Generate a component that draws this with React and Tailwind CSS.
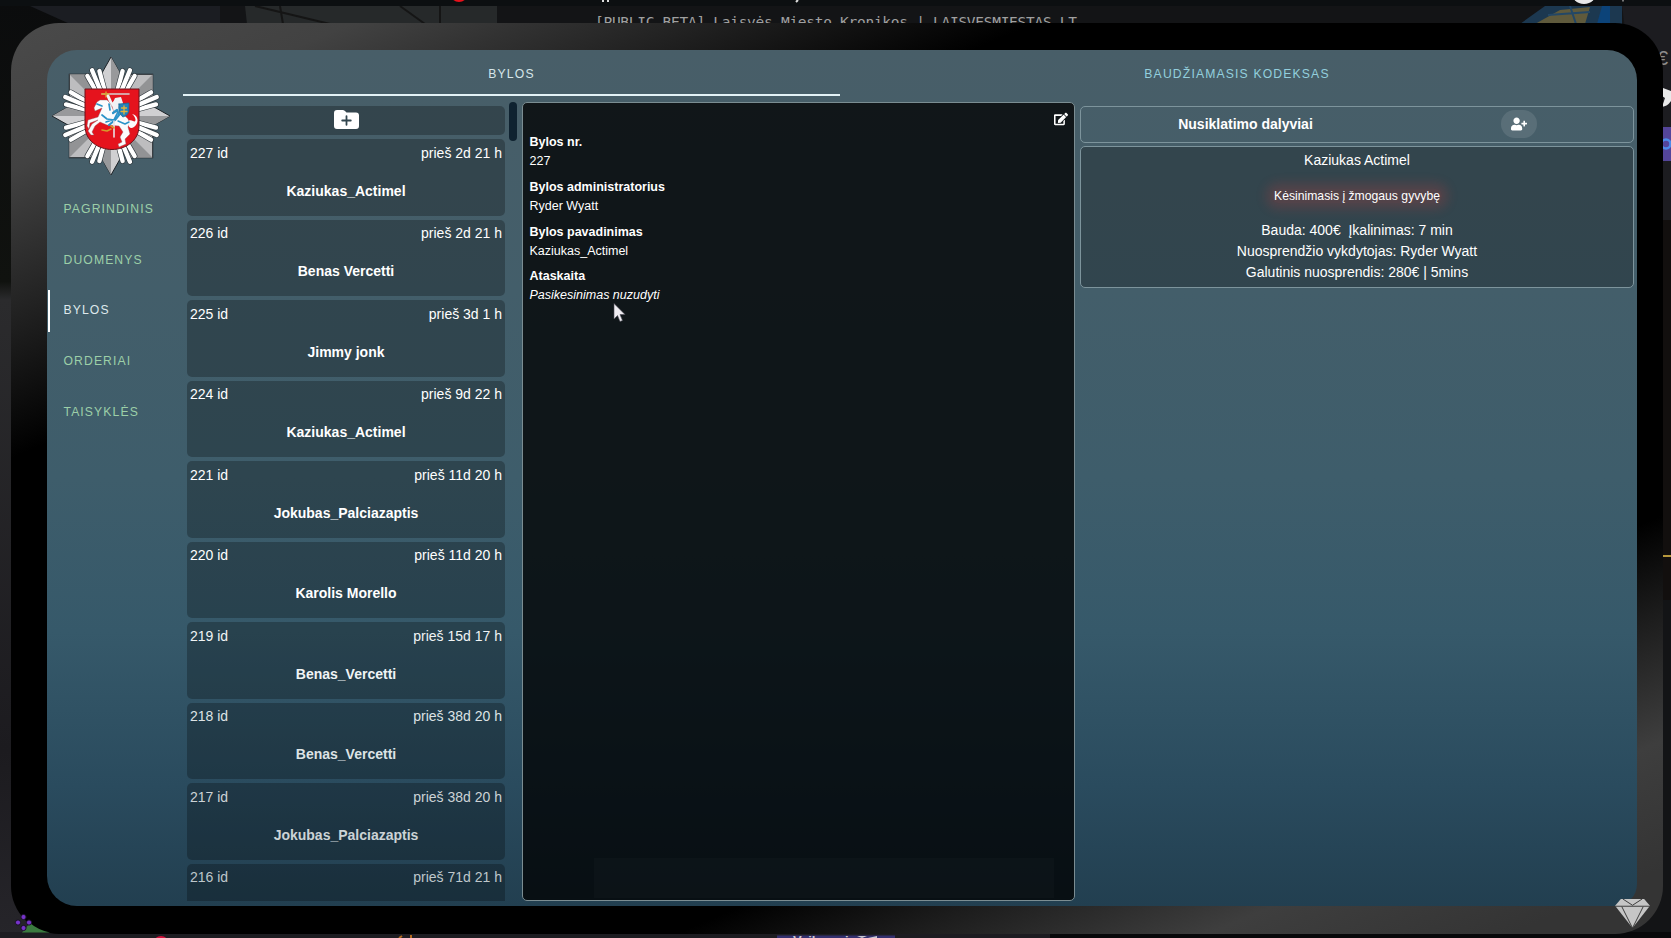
import React from "react";
import { FaEdit, FaUserPlus } from "react-icons/fa";

const NAV = ["PAGRINDINIS", "DUOMENYS", "BYLOS", "ORDERIAI", "TAISYKLĖS"];

const CASES = [
  ["227 id", "prieš 2d 21 h", "Kaziukas_Actimel", "text-white"],
  ["226 id", "prieš 2d 21 h", "Benas Vercetti", "text-white"],
  ["225 id", "prieš 3d 1 h", "Jimmy jonk", "text-white"],
  ["224 id", "prieš 9d 22 h", "Kaziukas_Actimel", "text-white"],
  ["221 id", "prieš 11d 20 h", "Jokubas_Palciazaptis", "text-white"],
  ["220 id", "prieš 11d 20 h", "Karolis Morello", "text-white"],
  ["219 id", "prieš 15d 17 h", "Benas_Vercetti", "text-[#f0f4f5]"],
  ["218 id", "prieš 38d 20 h", "Benas_Vercetti", "text-[#dde3e5]"],
  ["217 id", "prieš 38d 20 h", "Jokubas_Palciazaptis", "text-[#ccd3d6]"],
  ["216 id", "prieš 71d 21 h", "", "text-[#bec7cb]"],
];

const DETAILS = [
  ["Bylos nr.", "227"],
  ["Bylos administratorius", "Ryder Wyatt"],
  ["Bylos pavadinimas", "Kaziukas_Actimel"],
];

function Emblem() {
  const diagonals = [45, 135, 225, 315];
  const rays = [22.5, 67.5, 112.5, 157.5, 202.5, 247.5, 292.5, 337.5];
  return (
    <svg viewBox="-60 -60 120 120" className="h-[120px] w-[120px]">
      {diagonals.map((a) => (
        <g key={a} transform={`rotate(${a})`}>
          <path d="M0-59 L-17-42 L-12 0 H12 L17-42Z" fill="#bdbdbf" stroke="#1d2226" strokeWidth="1" />
          <path d="M0-59 L17-42 L12 0 H0Z" fill="#929395" />
        </g>
      ))}
      {[0, 90, 180, 270].map((a) => (
        <g key={a} transform={`rotate(${a})`}>
          <path d="M0-59 L-13-36 L-8 0 H8 L13-36Z" fill="#d0d0d2" stroke="#1d2226" strokeWidth="1" />
          <path d="M0-59 L13-36 L8 0 H0Z" fill="#98999b" />
        </g>
      ))}
      {rays.map((a) => (
        <g key={a} transform={`rotate(${a})`} strokeLinecap="round">
          <path d="M-2-12L-6.500-46M2-12L6.500-46" stroke="#30383d" strokeWidth="5.600" />
          <path d="M-2-12L-6.500-46M2-12L6.500-46" stroke="#ffffff" strokeWidth="4.400" />
          <path d="M0-12V-49.500" stroke="#30383d" strokeWidth="5.600" />
          <path d="M0-12V-49.500" stroke="#ffffff" strokeWidth="4.400" />
        </g>
      ))}
      <path d="M-26-27H28V10C28 25 14 33.500 1 33.500S-26 25-26 10Z" fill="#e5131d" stroke="#6d1118" strokeWidth="1" />
      <g strokeLinejoin="round" strokeLinecap="round">
        <path d="M-9-22H18" stroke="#d5cfd0" strokeWidth="1.600" />
        <path d="M-9-22H-2M-5-24V-19" stroke="#d59a2c" strokeWidth="1.500" />
        <path d="M-3-20L1-11L4-14" stroke="#f4f4f6" strokeWidth="3" fill="none" />
        <path d="M4-18L10-19L12-13L9-2L3 0L1-11Z" fill="#f1f1f4" />
        <path d="M-14-14L-11-16L-4-16C0-13 1-9 3-4L14 0C18 3 19 6 17 11L19 18L14 23L15 28L8 31L7 28L11 26L9 21L12 16L8 10L-4 9L-11 6L-16 10L-19 16L-17 19L-20 19L-23 15L-19 8L-13 4L-21 7L-22 13L-24 10L-23 4L-13 1L-9-8L-16-5L-17-8Z" fill="#fbfbfc" stroke="#8f5a66" strokeWidth=".4" />
        <path d="M17 8C15 5 19 3 22 5C26 7 25 1 21-2C28-1 28 8 23 11C20 13 18 12 17 8Z" fill="#fbfbfc" />
        <path d="M-14-12L-9-10M-2-12L-1-6M-9-1L-4 3L3 4L6-2M-5 6L1 4" stroke="#2b93c8" strokeWidth="1.700" fill="none" />
        <path d="M2-3L6-6L8-1L4 4L-2 9" stroke="#2b93c8" strokeWidth="2.200" fill="none" />
        <path d="M7 5L14 8L18 6" stroke="#2b93c8" strokeWidth="1.400" fill="none" />
        <path d="M3 5V21" stroke="#e8e2e4" strokeWidth="1.600" />
        <path d="M0 13L-4 15L-9 14M0 10L3 12" stroke="#d59a2c" strokeWidth="1.600" fill="none" />
        <path d="M8-12L18-13V-6C18-2 15 0 12 1C9-1 7-5 8-12Z" fill="#2382bb" stroke="#17648f" strokeWidth=".7" />
        <path d="M13-10V-2M10.500-8H15.500M10-4.500H16" stroke="#e3b43a" strokeWidth="1.300" />
      </g>
    </svg>
  );
}

function FolderPlus() {
  return (
    <svg viewBox="0 0 25 19" className="h-[19px] w-[25px]" aria-hidden="true">
      <path d="M3 0H8.500Q10 0 11 1L12.500 2.500H22Q25 2.500 25 5.500V16Q25 19 22 19H3Q0 19 0 16V3Q0 0 3 0Z" fill="#fff" />
      <path d="M8.200 10.500H16.800M12.500 6.200V14.800" stroke="#33464f" strokeWidth="1.800" strokeLinecap="round" />
    </svg>
  );
}

function Sidebar() {
  return (
    <aside className="flex w-[136px] shrink-0 flex-col">
      <div className="mt-[6px] ml-[4px] h-[120px]">
        <Emblem />
      </div>
      <nav className="mt-[12px] flex flex-col gap-[8.800px] text-[12.200px] tracking-[1.100px]">
        {NAV.map((n) => (
          <a
            key={n}
            className={
              n === "BYLOS"
                ? "ml-[1px] flex h-[42px] items-center border-l-2 border-white pl-[13.500px] text-[#dfe9ec]"
                : "ml-[1px] flex h-[42px] items-center border-l-2 border-transparent pl-[13.500px] text-[#9ccfa8]"
            }
          >
            {n}
          </a>
        ))}
      </nav>
    </aside>
  );
}

function CaseList() {
  return (
    <section className="flex w-[334px] shrink-0 justify-between pl-[4px]">
      <div className="flex w-[318px] flex-col gap-[4px] overflow-hidden pt-[4px]">
        <button className="flex h-[29px] shrink-0 items-center justify-center rounded-[5px] bg-black/26 pb-[2px] text-white">
          <FolderPlus />
        </button>
        {CASES.map(([id, ago, name, tone]) => (
          <article key={id} className={`flex h-[76.500px] shrink-0 flex-col rounded-[5px] bg-black/26 px-[3px] pt-[3.500px] ${tone}`}>
            <div className="flex justify-between text-[14px] leading-[20px]">
              <span>{id}</span>
              <span>{ago}</span>
            </div>
            {name && <h3 className="mt-[18px] text-center text-[14px] leading-[20px] font-bold">{name}</h3>}
          </article>
        ))}
      </div>
      <div className="h-[39px] w-[8px] rounded-[4px] bg-[#0f2230]" />
    </section>
  );
}

function CaseDetails() {
  return (
    <section className="flex w-[553.500px] shrink-0 flex-col rounded-[5px] border border-[#7b8d92] bg-black/76 px-[7px] text-[12.500px] text-white">
      <div className="flex h-[30px] items-center justify-end">
        <FaEdit size={14} className="mt-[2px] mr-[-1px]" />
      </div>
      <dl className="flex flex-col leading-[19.400px]">
        {DETAILS.map(([k, v]) => (
          <div key={k} className="mb-[6px]">
            <dt className="font-bold">{k}</dt>
            <dd>{v}</dd>
          </div>
        ))}
        <dt className="font-bold">Ataskaita</dt>
        <dd className="leading-[17px] italic">Pasikesinimas nuzudyti</dd>
      </dl>
      <div className="mt-auto mr-[13px] mb-[2px] ml-[64px] h-[40px] bg-white/2" />
    </section>
  );
}

function Participants() {
  return (
    <section className="ml-[5px] flex w-[554px] shrink-0 flex-col gap-[3px] pt-[4px] text-[14px] text-white">
      <header className="flex h-[37px] items-center rounded-[5px] border border-[#7d949c]">
        <div className="w-[329px] pb-[1px] text-center font-bold">Nusiklatimo dalyviai</div>
        <div className="flex flex-1 justify-center pr-[6px] pb-[1px]">
          <button className="flex h-[28px] w-[36px] items-center justify-center rounded-full bg-white/10">
            <FaUserPlus size={16} />
          </button>
        </div>
      </header>
      <article className="flex h-[142px] flex-col items-center rounded-[5px] border border-[#7d949c] bg-black/26 leading-[21px]">
        <div className="mt-[3px]">Kaziukas Actimel</div>
        <div className="mt-[18px] rounded-[6px] bg-[#d23c3c]/20 px-[2px] text-[12.200px] leading-[14px] shadow-[0_0_11px_6px_rgba(210,60,60,0.2)]">
          Kėsinimasis į žmogaus gyvybę
        </div>
        <div className="mt-[17px]">Bauda: 400€&nbsp; Įkalinimas: 7 min</div>
        <div>Nuosprendžio vykdytojas: Ryder Wyatt</div>
        <div>Galutinis nuosprendis: 280€ | 5mins</div>
      </article>
    </section>
  );
}

function Backdrop() {
  return (
    <svg viewBox="0 0 1671 938" className="absolute inset-0 h-full w-full" aria-hidden="true">
      <defs>
        <linearGradient id="left" x1="0" y1="0" x2="0" y2="1">
          <stop offset="0" stopColor="#0b0c0d" />
          <stop offset=".3" stopColor="#10120f" />
          <stop offset=".32" stopColor="#2b2b2d" />
          <stop offset=".8" stopColor="#1c1b1f" />
          <stop offset="1" stopColor="#26252a" />
        </linearGradient>
      </defs>
      <rect width="1671" height="938" fill="#131416" />
      <rect width="70" height="938" fill="url(#left)" />
      <path d="M30 6H220V24H70Z" fill="#1b1d22" />
      <path d="M245 6H497V24H247Z" fill="#26292a" />
      <path d="M255 6L330 24M280 6L283 24M400 6L425 24M440 6V24" stroke="#151515" strokeWidth="2" />
      <path d="M1545 6H1622V24H1520Z" fill="#1c3850" />
      <path d="M1560 10L1590 7L1585 24H1535Z" fill="#5f5a3c" />
      <path d="M1570 6L1576 24M1548 15L1590 12" stroke="#234766" strokeWidth="2" />
      <path d="M1602 6H1610V24H1597Z" fill="#0c4379" />
      <path d="M1622 6H1671V220H1650Z" fill="#1c1c20" />
      <path d="M1655 220H1671V600H1655Z" fill="#120f0e" />
      <path d="M1655 555H1671V557H1655Z" fill="#b7983c" />
      <rect width="1671" height="6" fill="#0c0f11" />
      <rect y="932" width="1671" height="6" fill="#1d1c21" />
      <rect x="1050" y="932" width="621" height="6" fill="#08080a" />
      <circle cx="459" cy="-7" r="9" fill="#e8111b" />
      <circle cx="1584" cy="-9" r="13" fill="#e9e9e9" />
      <path d="M603 0V2M608 0V2M798 0L796 2" stroke="#ddd" strokeWidth="2" />
      <path d="M1623 0V1.500" stroke="#999" strokeWidth="1.500" />
      <circle cx="161" cy="944" r="8" fill="#d5103a" />
      <path d="M399 938L402 936M411 938V935" stroke="#b36a1d" strokeWidth="2" />
      <rect x="777" y="935.500" width="118" height="6" fill="#34306e" />
      <text x="793" y="945" fontSize="13" fontWeight="700" fill="#c9c9d2" fontFamily="Liberation Sans, sans-serif">
        Veiksmai
      </text>
      <path d="M857 936H867L862 938ZM868 938L877 936V938Z" fill="#c9c9d2" />
      <rect x="1655" y="127" width="20" height="34" rx="4" fill="#54459a" />
      <circle cx="1666" cy="144" r="4.500" fill="none" stroke="#4c8bea" strokeWidth="2.500" />
      <path d="M1663 88L1671 91V101C1669 104 1667 106 1662 107L1665 98L1662 96Z" fill="#e9e9e9" />
      <text x="1657" y="65" fontSize="20" fill="#8c8c8c" fontFamily="Liberation Sans, sans-serif">€</text>
      <text x="595" y="26.500" fontSize="14.500" textLength="482" fill="#a0a0a0" fontFamily="DejaVu Sans Mono, monospace">
        [PUBLIC BETA] Laisvės Miesto Kronikos | LAISVESMIESTAS.LT
      </text>
    </svg>
  );
}

export default function App() {
  return (
    <div className="relative h-[938px] w-[1671px] overflow-hidden bg-[#131416] pt-[23px] pl-[11px] font-['Liberation_Sans',Arial,sans-serif]">
      <Backdrop />
      <main className="relative h-[911px] w-[1652px] rounded-[48px] bg-[linear-gradient(157deg,#4a4a4a_0%,#424242_9%,#222_18%,#000_27%,#000_74%,#1c1c1c_80%,#3e3e3e_88%,#343434_96%)] pt-[27px] pl-[36px]">
        <div className="flex h-[856px] w-[1590px] overflow-hidden rounded-[30px] rounded-br-[22px] bg-[linear-gradient(180deg,#485e68_0%,#435e6a_28%,#3e5d6b_50%,#36596a_68%,#2a4b5e_86%,#223f50_100%)]">
          <Sidebar />
          <div className="flex flex-col">
            <div className="flex h-[46px] shrink-0 text-[12.200px] tracking-[1.150px]">
              <div className="flex w-[657px] items-center justify-center border-b-2 border-[#e3f2f6] pt-[5px] text-[#d6e6ea]">BYLOS</div>
              <div className="flex w-[794px] items-center justify-center border-b-2 border-transparent pt-[5px] text-[#93cfdd]">BAUDŽIAMASIS KODEKSAS</div>
            </div>
            <div className="mt-[6px] flex h-[799px]">
              <CaseList />
              <div className="ml-[4.500px] flex">
                <CaseDetails />
              </div>
              <Participants />
            </div>
          </div>
        </div>
      </main>
      <svg viewBox="0 0 50 30" className="absolute top-[908px] left-[10px] h-[30px] w-[50px]" aria-hidden="true">
        <path d="M12 24.500L20 15Q28 22 40 24.500Z" fill="#3b7a3f" />
        <g fill="#7633c9" stroke="#1a1026" strokeWidth="1">
          <circle cx="13.500" cy="9" r="2.600" />
          <circle cx="13.500" cy="20" r="2.600" />
          <circle cx="8" cy="14.500" r="2.600" />
          <circle cx="19" cy="14.500" r="2.600" />
        </g>
      </svg>
      <svg viewBox="0 0 36 32" className="absolute top-[898px] left-[1614px] h-[31px] w-[37px]" aria-hidden="true">
        <path d="M6 1H30L36 8L18 31L0 8Z" fill="#c6c6c6" />
        <path d="M0 8.500H36M8 1L18 7.500L28 1M7 9L18 31L29 9" stroke="#3a3a3a" strokeWidth="1" fill="none" />
      </svg>
      <svg viewBox="0 0 12 20" className="absolute top-[303px] left-[613px] h-[20px] w-[13px]" aria-hidden="true">
        <path d="M.5 .5V16L4 12.500L6.500 18.500L9 17.500L6.500 11.500H11.500Z" fill="#efedf2" stroke="#4b4b55" strokeWidth=".6" />
      </svg>
    </div>
  );
}
